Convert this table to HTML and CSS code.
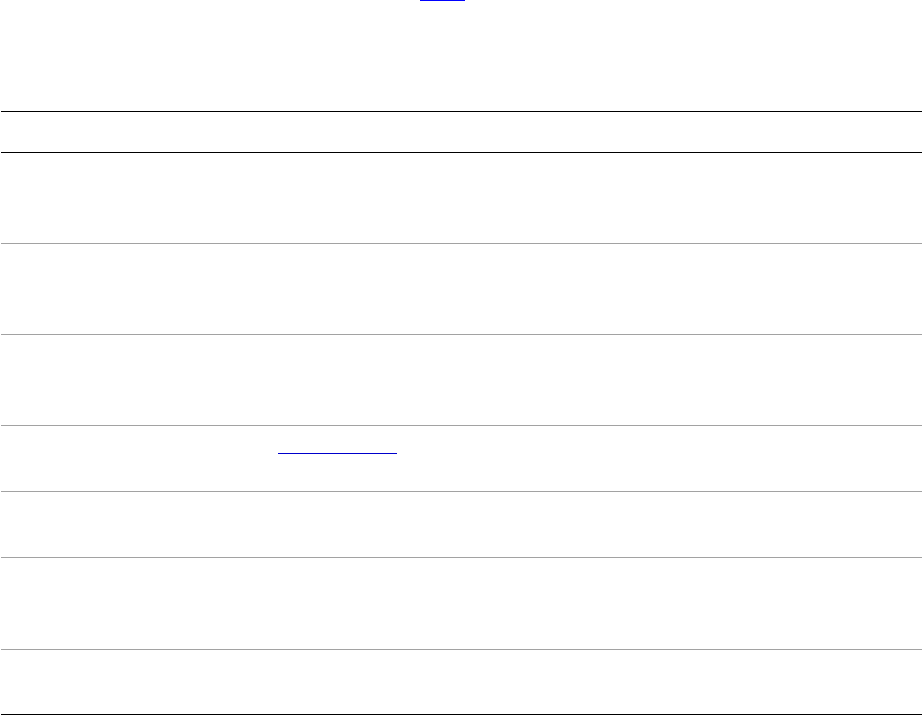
FILE: index.html
```html
<!DOCTYPE html>
<html>
<head>
<meta charset="utf-8">
<link rel="stylesheet" href="styles.css">
</head>
<body>
<div class="top">
  <a class="toplink" href="#"></a>
</div>
<div class="table">
  <div class="row head"></div>
  <div class="row r90"></div>
  <div class="row r90"></div>
  <div class="row r90"></div>
  <div class="row r65"><a class="celllink" href="#"></a></div>
  <div class="row r65"></div>
  <div class="row r91"></div>
  <div class="row r64 last"></div>
</div>
</body>
</html>
```
FILE: styles.css
```css
html, body {
  margin: 0;
  padding: 0;
  background: #fff;
  font-family: "Liberation Sans", Arial, sans-serif;
  overflow: hidden;
}
.top {
  height: 111px;
  padding-left: 420px;
  box-sizing: border-box;
}
.toplink {
  display: block;
  width: 45px;
  height: 0;
  border-top: 1px solid #00f;
}
.table {
  margin-left: 1px;
  width: 921px;
  border-top: 1px solid #000;
}
.row {
  border-bottom: 1px solid #a2a2a2;
  box-sizing: content-box;
}
.head {
  height: 40px;
  border-bottom-color: #000;
}
.r90 { height: 90px; }
.r65 { height: 65px; }
.r91 { height: 91px; }
.r64 { height: 64px; }
.last { border-bottom-color: #000; }
.celllink {
  display: block;
  margin-left: 277px;
  padding-top: 27px;
  width: 119px;
  height: 0;
  border-bottom: 1px solid #00c;
}
```
